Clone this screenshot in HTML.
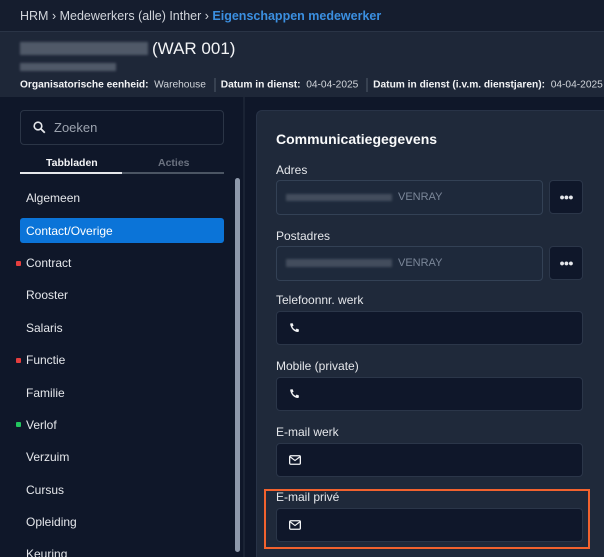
<!DOCTYPE html>
<html><head><meta charset="utf-8"><style>
*{margin:0;padding:0;box-sizing:border-box}
html,body{width:604px;height:557px;overflow:hidden}
body{background:#0f1729;font-family:"Liberation Sans",sans-serif;color:#e5e7eb;position:relative}
.a{position:absolute}
.top{left:0;top:0;width:604px;height:31px;background:#151d2e;font-size:12.5px;color:#d1d5db;padding:9px 0 0 20px;white-space:nowrap}
.top b{color:#3b8fe0}
.hdr{left:0;top:31px;width:604px;height:66px;background:#1e2738;border-top:1px solid #2a3446}
.blur{background:#5d6675;filter:blur(1.2px);opacity:.8}
.meta{left:20px;top:78px;font-size:10.2px;white-space:nowrap;color:#d1d5db}
.meta b{color:#f3f4f6}
.sep{display:inline-block;width:2px;height:14px;background:#374151;vertical-align:middle;margin:0 5px}
.item{left:26px;font-size:12px;color:#e5e7eb}
.dot{left:16px;width:5px;height:5px;border-radius:1px}
.lbl{left:276px;font-size:12px;color:#e5e7eb}
.in{background:#0f172a;border:1px solid #2b3649;border-radius:4px}
.in2{background:#1e293b;border:1px solid #334155;border-radius:4px}
.dots{left:0;top:0;text-align:center;font-size:9px;font-weight:bold;line-height:32px;color:#e5e7eb;letter-spacing:-1px}
</style></head><body>
<div class="a top">HRM › Medewerkers (alle) Inther › <b>Eigenschappen medewerker</b></div>
<div class="a hdr"></div>
<div class="a blur" style="left:20px;top:42px;width:128px;height:13px"></div>
<div class="a" style="left:152px;top:39px;font-size:17px;color:#f3f4f6">(WAR 001)</div>
<div class="a blur" style="left:20px;top:63px;width:96px;height:8px"></div>
<div class="a meta"><b>Organisatorische eenheid:</b>&nbsp; Warehouse <span class="sep"></span><b>Datum in dienst:</b>&nbsp; 04-04-2025 <span class="sep"></span><b>Datum in dienst (i.v.m. dienstjaren):</b>&nbsp; 04-04-2025</div>
<div class="a" style="left:243px;top:97px;width:2px;height:460px;background:#1a2334"></div>
<div class="a" style="left:20px;top:110px;width:204px;height:35px;border:1px solid #2b3546;border-radius:4px"></div>
<svg class="a" style="left:33px;top:121px" width="13" height="13" viewBox="0 0 13 13"><circle cx="5" cy="5" r="3.8" fill="none" stroke="#e5e7eb" stroke-width="1.6"/><path d="M8 8l3.8 3.8" stroke="#e5e7eb" stroke-width="1.8"/></svg>
<div class="a" style="left:54px;top:120px;font-size:13px;color:#9ca3af">Zoeken</div>
<div class="a" style="left:46px;top:157px;font-size:10.5px;font-weight:bold;color:#f3f4f6">Tabbladen</div>
<div class="a" style="left:158px;top:157px;font-size:10.5px;font-weight:bold;color:#6b7280">Acties</div>
<div class="a" style="left:20px;top:172px;width:204px;height:2px;background:#4b5563"></div>
<div class="a" style="left:20px;top:172px;width:102px;height:2px;background:#e5e7eb"></div>
<div class="a" style="left:235px;top:178px;width:5px;height:374px;background:#8e99ab;border-radius:3px"></div>
<div class="a" style="left:20px;top:218px;width:204px;height:25px;background:#0b74d8;border-radius:3px"></div>
<div class="a item" style="top:191px">Algemeen</div>
<div class="a item" style="top:224px;color:#fff">Contact/Overige</div>
<div class="a item" style="top:256px">Contract</div>
<div class="a item" style="top:288px">Rooster</div>
<div class="a item" style="top:321px">Salaris</div>
<div class="a item" style="top:353px">Functie</div>
<div class="a item" style="top:386px">Familie</div>
<div class="a item" style="top:418px">Verlof</div>
<div class="a item" style="top:450px">Verzuim</div>
<div class="a item" style="top:483px">Cursus</div>
<div class="a item" style="top:515px">Opleiding</div>
<div class="a item" style="top:547px">Keuring</div>
<div class="a dot" style="top:261px;background:#e53e3e"></div>
<div class="a dot" style="top:358px;background:#e53e3e"></div>
<div class="a dot" style="top:422px;background:#22c55e"></div>
<div class="a" style="left:256px;top:110px;width:360px;height:447px;background:#1f293a;border:1px solid #283347;border-bottom:none;border-radius:6px 6px 0 0"></div>
<div class="a" style="left:276px;top:131px;font-size:14px;font-weight:bold;color:#f9fafb">Communicatiegegevens</div>
<div class="a lbl" style="top:163px">Adres</div>
<div class="a in2" style="left:276px;top:180px;width:267px;height:35px"></div>
<div class="a blur" style="left:286px;top:194px;width:106px;height:7px;opacity:.6"></div>
<div class="a" style="left:398px;top:191px;font-size:11px;color:#7b8799">VENRAY</div>
<div class="a in" style="left:549px;top:180px;width:34px;height:34px"><div class="a dots" style="width:32px">●●●</div></div>
<div class="a lbl" style="top:229px">Postadres</div>
<div class="a in2" style="left:276px;top:246px;width:267px;height:35px"></div>
<div class="a blur" style="left:286px;top:259px;width:106px;height:8px;opacity:.6"></div>
<div class="a" style="left:398px;top:257px;font-size:11px;color:#7b8799">VENRAY</div>
<div class="a in" style="left:549px;top:246px;width:34px;height:34px"><div class="a dots" style="width:32px">●●●</div></div>
<div class="a lbl" style="top:293px">Telefoonnr. werk</div>
<div class="a in" style="left:276px;top:311px;width:307px;height:34px"></div>
<div class="a lbl" style="top:359px">Mobile (private)</div>
<div class="a in" style="left:276px;top:377px;width:307px;height:34px"></div>
<div class="a lbl" style="top:425px">E-mail werk</div>
<div class="a in" style="left:276px;top:443px;width:307px;height:34px"></div>
<div class="a" style="left:264px;top:489px;width:326px;height:60px;border:2px solid #f2622e"></div>
<div class="a lbl" style="top:490px">E-mail privé</div>
<div class="a in" style="left:276px;top:508px;width:307px;height:34px"></div>
<svg class="a" style="left:289px;top:322px" width="12" height="12" viewBox="0 0 11 11"><path d="M1 1.5l2.2-.5 1 2.2-1.2 1a6 6 0 0 0 3 3l1-1.2 2.2 1-.5 2.2C5 9.5 1.5 6 1 1.5z" fill="#f3f4f6"/></svg>
<svg class="a" style="left:289px;top:388px" width="12" height="12" viewBox="0 0 11 11"><path d="M1 1.5l2.2-.5 1 2.2-1.2 1a6 6 0 0 0 3 3l1-1.2 2.2 1-.5 2.2C5 9.5 1.5 6 1 1.5z" fill="#f3f4f6"/></svg>
<svg class="a" style="left:289px;top:455px" width="12" height="10" viewBox="0 0 11 9"><rect x=".6" y=".6" width="9.8" height="7.8" rx="1" fill="none" stroke="#f3f4f6" stroke-width="1.2"/><path d="M1 1.5l4.5 3.5 4.5-3.5" fill="none" stroke="#f3f4f6" stroke-width="1.1"/></svg>
<svg class="a" style="left:289px;top:520px" width="12" height="10" viewBox="0 0 11 9"><rect x=".6" y=".6" width="9.8" height="7.8" rx="1" fill="none" stroke="#f3f4f6" stroke-width="1.2"/><path d="M1 1.5l4.5 3.5 4.5-3.5" fill="none" stroke="#f3f4f6" stroke-width="1.1"/></svg>
</body></html>
